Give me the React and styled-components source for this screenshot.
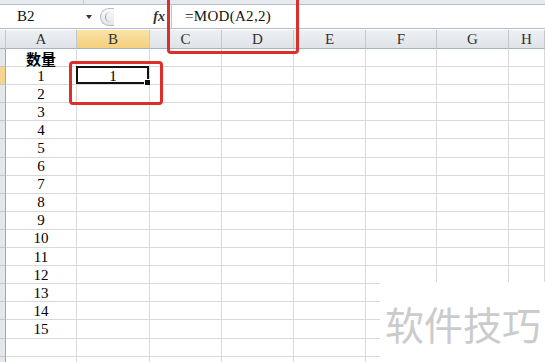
import React from 'react';
import styled, { createGlobalStyle } from 'styled-components';

const GlobalStyle = createGlobalStyle`
  html, body { margin: 0; padding: 0; background: #fff; overflow: hidden; }
  body { font-family: "Liberation Serif", "Noto Sans CJK SC", serif; }
`;

const COLS = ['A', 'B', 'C', 'D', 'E', 'F', 'G', 'H'];

const Page = styled.div`
  position: relative;
  width: 545px;
  height: 362px;
  overflow: hidden;
  background: #fff;
`;

const Ribbon = styled.div`
  height: 4px;
  background: #e6e9ee;
  border-bottom: 1px solid #b7bec7;
  display: flex;
`;

const RibbonPart = styled.div`
  width: ${p => p.w}px;
  border-right: 1px solid #c9ced5;
`;

const FormulaBar = styled.div`
  height: 23px;
  display: flex;
  align-items: center;
  border-bottom: 1px solid #b7bec7;
  background: #fff;
`;

const NameBox = styled.div`
  width: 98px;
  height: 100%;
  display: flex;
  align-items: center;
  justify-content: space-between;
  padding: 0 6px 0 17px;
  box-sizing: border-box;
  font-family: "Liberation Serif", serif;
  font-size: 15px;
  color: #111;
`;

const Arrow = styled.span`
  width: 0;
  height: 0;
  border-left: 3px solid transparent;
  border-right: 3px solid transparent;
  border-top: 4px solid #333;
  margin-top: 1px;
`;

const Splitter = styled.div`
  width: 14px;
  height: 18px;
  margin-left: 2px;
  border: 1px solid #b4bac2;
  border-radius: 9px 0 0 9px;
  border-right: none;
  background: linear-gradient(#fbfbfc, #e2e5ea);
  display: flex;
  align-items: center;
  padding-left: 4px;
  box-sizing: border-box;
  &::after {
    content: '';
    width: 5px;
    height: 10px;
    border-left: 1px solid #9aa0a8;
    border-radius: 5px 0 0 5px;
  }
`;

const Fx = styled.div`
  width: 57px;
  text-align: right;
  padding-right: 6px;
  box-sizing: border-box;
  font-family: "Liberation Serif", serif;
  font-style: italic;
  font-weight: bold;
  font-size: 14px;
  color: #333;
`;

const FormulaInput = styled.div`
  flex: 1;
  height: 100%;
  border-left: 1px solid #c4c9d0;
  padding-left: 13px;
  display: flex;
  align-items: center;
  font-size: 15px;
  letter-spacing: 0.3px;
  color: #111;
`;

const Sheet = styled.div`
  margin-top: 1px;
  display: grid;
  grid-template-columns: 6px 71px 73px 72px 72px 72px 71px 72px 1fr;
  grid-template-rows: 19px;
  grid-auto-rows: 18.1px;
`;

const ColHead = styled.div`
  background: ${p => (p.active ? 'linear-gradient(#fbe3a8, #f5cf7c)' : 'linear-gradient(#eef0f3, #dfe3e8)')};
  border-right: 1px solid #c3c8ce;
  border-bottom: 1px solid #a9b2bd;
  display: flex;
  align-items: center;
  justify-content: center;
  font-size: 15px;
  color: #333;
  box-sizing: border-box;
  padding-top: 1px;
`;

const RowHead = styled.div`
  background: ${p => (p.active ? '#f6d68f' : '#e4e7eb')};
  border-right: 1px solid #9ea7b2;
  border-bottom: 1px solid #c3c8ce;
  box-sizing: border-box;
`;

const Cell = styled.div`
  position: relative;
  border-right: 1px solid #d9d9d9;
  border-bottom: 1px solid #d9d9d9;
  box-sizing: border-box;
  display: flex;
  align-items: center;
  justify-content: center;
  padding-top: 1px;
  font-size: 15px;
  color: #000;
  font-weight: ${p => (p.bold ? 'bold' : 'normal')};
  font-family: ${p => (p.bold ? '"Noto Sans CJK SC", sans-serif' : '"Liberation Serif", serif')};
`;

const Selection = styled.div`
  position: absolute;
  left: -1px;
  top: -1px;
  right: 0;
  bottom: 0;
  border: 2px solid #111;
  &::after {
    content: '';
    position: absolute;
    right: -4px;
    bottom: -4px;
    width: 5px;
    height: 5px;
    background: #111;
    border: 1px solid #fff;
  }
`;

const Highlight = styled.div`
  position: absolute;
  left: ${p => p.x}px;
  top: ${p => p.y}px;
  width: ${p => p.w}px;
  height: ${p => p.h}px;
  border: 3px solid #dc2f2a;
  border-radius: 4px;
  box-sizing: border-box;
  pointer-events: none;
`;

const Watermark = styled.div`
  position: absolute;
  left: 380px;
  top: 282px;
  right: 0;
  bottom: 0;
  background: #fff;
  display: flex;
  align-items: center;
  padding-left: 5px;
  padding-top: 2px;
  font-family: "Noto Sans CJK SC", sans-serif;
  font-size: 39px;
  color: #cbcbcb;
  white-space: nowrap;
`;

const values = ['数量', ...Array.from({ length: 15 }, (_, i) => String(i + 1))];

export default function App() {
  const rows = Array.from({ length: 18 }, (_, i) => i);
  return (
    <Page>
      <GlobalStyle />
      <Ribbon>
        <RibbonPart w={83} />
      </Ribbon>
      <FormulaBar>
        <NameBox>
          B2
          <Arrow />
        </NameBox>
        <Splitter />
        <Fx>fx</Fx>
        <FormulaInput>=MOD(A2,2)</FormulaInput>
      </FormulaBar>
      <Sheet>
        <ColHead />
        {COLS.map(c => (
          <ColHead key={c} active={c === 'B'}>{c}</ColHead>
        ))}
        {rows.map(r => (
          <React.Fragment key={r}>
            <RowHead active={r === 1} />
            {COLS.map(c => (
              <Cell key={c} bold={c === 'A' && r === 0}>
                {c === 'A' ? values[r] : c === 'B' && r === 1 ? '1' : ''}
                {c === 'B' && r === 1 && <Selection />}
              </Cell>
            ))}
          </React.Fragment>
        ))}
      </Sheet>
      <Highlight x={167} y={-4} w={132} h={58} />
      <Highlight x={69} y={61} w={94} h={44} />
      <Watermark>软件技巧</Watermark>
    </Page>
  );
}
